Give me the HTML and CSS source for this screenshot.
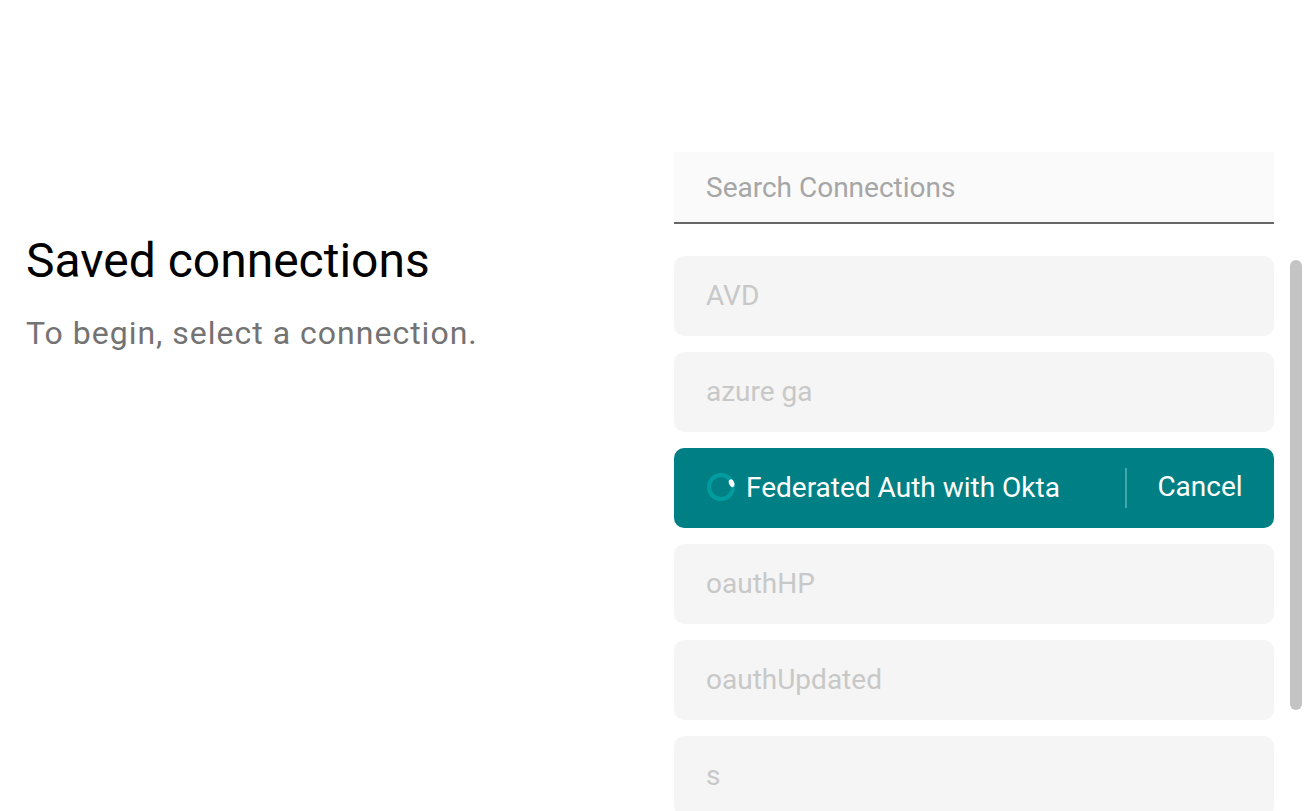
FILE: index.html
```html
<!DOCTYPE html>
<html lang="en">
<head>
<meta charset="utf-8">
<title>Saved connections</title>
<link rel="stylesheet" href="styles.css">
</head>
<body>
<main class="page">
  <section class="intro">
    <h1 class="title">Saved connections</h1>
    <p class="subtitle">To begin, select a connection.</p>
  </section>
  <section class="panel">
    <div class="search"><span class="search-text">Search Connections</span></div>
    <ul class="list">
      <li class="item">AVD</li>
      <li class="item">azure ga</li>
      <li class="item item-active">
        <span class="active-main">
          <svg class="spinner" viewBox="0 0 28 28" aria-hidden="true">
            <circle cx="14" cy="14" r="12" fill="none" stroke="#009ca0" stroke-width="4"/>
            <ellipse cx="24.6" cy="10.2" rx="2.6" ry="4" fill="#fff" transform="rotate(-20 24.6 10.2)"/>
          </svg>
          <span>Federated Auth with Okta</span>
        </span>
        <span class="cancel">Cancel</span>
      </li>
      <li class="item">oauthHP</li>
      <li class="item">oauthUpdated</li>
      <li class="item">s</li>
    </ul>
  </section>
</main>
<div class="scroll-thumb"></div>
</body>
</html>
```
FILE: styles.css
```css
* { box-sizing: border-box; }
html, body { margin: 0; height: 100%; overflow: hidden; background: #fff; }
body { font-family: Roboto, "Liberation Sans", sans-serif; }
.page { display: flex; align-items: flex-start; height: 811px; padding: 152px 34px 0 26px; justify-content: space-between; }
.intro { padding-top: 79px; }
.title { margin: 0; font-size: 48px; line-height: 60px; font-weight: 400; color: #000; }
.subtitle { margin: 22px 0 0; font-size: 32px; line-height: 40px; letter-spacing: 1px; color: #737373; }
.panel { width: 600px; flex: none; }
.search { height: 72px; background: #fafafa; border-bottom: 2px solid #666; padding: 0 32px; display: flex; align-items: center; }
.search-text { font-size: 28px; color: #a6a6a6; }
.list { list-style: none; margin: 32px 0 0; padding: 0; display: flex; flex-direction: column; gap: 16px; }
.item { height: 80px; flex: none; background: #f5f5f5; border-radius: 10px; padding: 0 32px 2px; display: flex; align-items: center; font-size: 28px; color: #c8c8c8; }
.item-active { background: #008084; color: #fff; justify-content: space-between; padding: 0 0 0 33px; }
.active-main { display: flex; align-items: center; gap: 11px; padding-bottom: 2px; }
.spinner { width: 28px; height: 28px; flex: none; }
.cancel { width: 149px; height: 40px; border-left: 2px solid #3fa8ab; display: flex; align-items: center; justify-content: center; padding: 0 1px 4px 0; }
.scroll-thumb { position: absolute; left: 1290px; top: 260px; width: 12px; height: 450px; border-radius: 6px; background: #c4c4c4; }
```
